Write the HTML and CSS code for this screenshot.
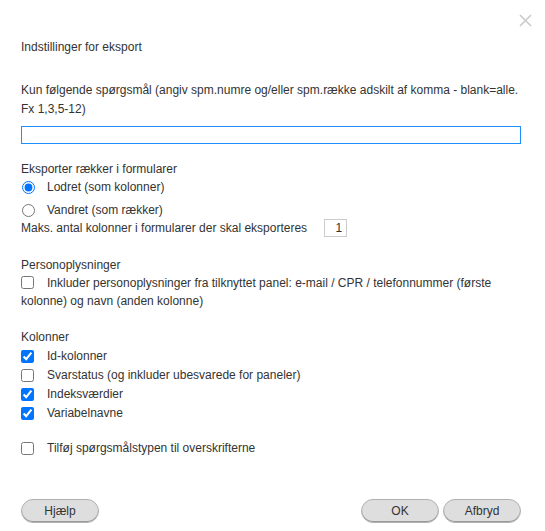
FILE: index.html
```html
<!DOCTYPE html>
<html lang="da">
<head>
    <meta charset="UTF-8">
    <meta name="viewport" content="width=device-width, initial-scale=1.0">
    <title>Indstillinger for eksport</title>
    <link rel="stylesheet" href="styles.css">
</head>
<body>
    <div class="dialog">
        <div class="dialog-top">
            <button class="close" type="button" aria-label="Luk">
                <svg width="13" height="13" viewBox="0 0 13 13">
                    <path d="M1 1 L12 12 M12 1 L1 12" stroke="#cacaca" stroke-width="1.6" fill="none"/>
                </svg>
            </button>
        </div>

        <div class="title">Indstillinger for eksport</div>

        <div class="questions">
            <label for="questions">Kun følgende spørgsmål (angiv spm.numre og/eller spm.række adskilt af komma - blank=alle. Fx 1,3,5-12)</label>
            <input type="text" id="questions" class="text-input">
        </div>

        <div class="group">
            <div class="group-title">Eksporter rækker i formularer</div>
            <label class="radio-row"><input type="radio" name="rows" checked> Lodret (som kolonner)</label>
            <label class="radio-row second"><input type="radio" name="rows"> Vandret (som rækker)</label>
            <div class="max-row">
                <span>Maks. antal kolonner i formularer der skal eksporteres</span>
                <input type="text" class="num-input" value="1">
            </div>
        </div>

        <div class="group personal">
            <div class="group-title">Personoplysninger</div>
            <label class="wrap-check"><input type="checkbox">Inkluder personoplysninger fra tilknyttet panel: e-mail / CPR / telefonnummer (første kolonne) og navn (anden kolonne)</label>
        </div>

        <div class="group columns">
            <div class="group-title">Kolonner</div>
            <label class="check-row"><input type="checkbox" checked> Id-kolonner</label>
            <label class="check-row"><input type="checkbox"> Svarstatus (og inkluder ubesvarede for paneler)</label>
            <label class="check-row"><input type="checkbox" checked> Indeksværdier</label>
            <label class="check-row"><input type="checkbox" checked> Variabelnavne</label>
        </div>

        <label class="check-row types"><input type="checkbox"> Tilføj spørgsmålstypen til overskrifterne</label>

        <div class="buttons">
            <button type="button" class="btn">Hjælp</button>
            <div class="right-buttons">
                <button type="button" class="btn">OK</button>
                <button type="button" class="btn">Afbryd</button>
            </div>
        </div>
    </div>
</body>
</html>
```

FILE: styles.css
```css
body {
    margin: 0;
    padding: 0;
    background: #fff;
    font-family: "Liberation Sans", Arial, sans-serif;
    font-size: 12px;
    color: #333;
}
.dialog {
    width: 545px;
    height: 531px;
    box-sizing: border-box;
    padding: 0 24px 0 21px;
    display: flex;
    flex-direction: column;
    line-height: 19px;
}
.dialog-top {
    height: 38px;
    display: flex;
    justify-content: flex-end;
    align-items: flex-start;
    margin-right: -11px;
}
.close {
    border: 0;
    background: none;
    padding: 0;
    margin-top: 14px;
    width: 13px;
    height: 13px;
    cursor: pointer;
}
.close svg {
    display: block;
}
.title {
    height: 19px;
}
.questions {
    margin-top: 24px;
}
.questions label {
    display: block;
}
.text-input {
    display: block;
    box-sizing: border-box;
    width: 500px;
    height: 18px;
    margin: 7px 0 0;
    border: 1px solid #1e90ff;
    padding: 0 4px;
    font: inherit;
    outline: none;
}
.group {
    margin-top: 16px;
}
.group-title {
    height: 19px;
}
.radio-row {
    display: flex;
    align-items: center;
    height: 17px;
    margin-bottom: 6px;
}
.radio-row.second {
    margin-bottom: 0;
}
.radio-row input {
    margin: 0 12px 0 1px;
    width: 13px;
    height: 13px;
}
.max-row {
    display: flex;
    align-items: center;
    height: 18px;
}
.num-input {
    box-sizing: border-box;
    width: 23px;
    height: 18px;
    margin-left: 17px;
    border: 1px solid #ccc;
    padding: 0 4px 0 0;
    font: inherit;
    color: #333;
    text-align: right;
}
.personal {
    margin-top: 19px;
    line-height: 18px;
}
.personal .group-title {
    height: 18px;
}
.wrap-check {
    display: block;
}
.wrap-check input {
    margin: 0 13px 0 0;
    width: 13px;
    height: 13px;
    vertical-align: -2px;
}
.columns {
    margin-top: 18px;
}
.check-row {
    display: flex;
    align-items: center;
    height: 19px;
}
.check-row input {
    margin: 0 13px 0 0;
    width: 13px;
    height: 13px;
}
.types {
    margin-top: 16px;
}
.buttons {
    margin-top: auto;
    margin-bottom: 8px;
    display: flex;
    justify-content: space-between;
}
.right-buttons {
    display: flex;
    gap: 4px;
}
.btn {
    width: 78px;
    height: 24px;
    border: 1px solid #b0b0b0;
    border-radius: 12px;
    background: #dedede;
    box-shadow: inset 0 -1px 0 #9a9a9a;
    font-family: "Liberation Sans", Arial, sans-serif;
    font-size: 12px;
    color: #333;
    cursor: pointer;
}
```
